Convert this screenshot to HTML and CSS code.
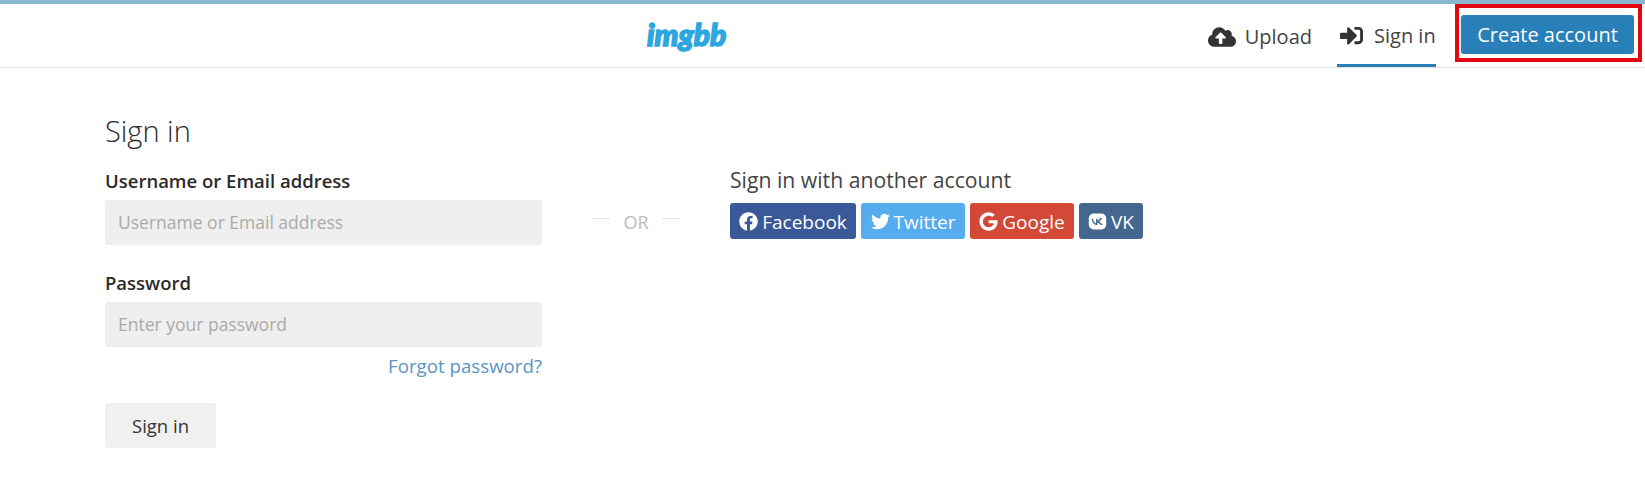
FILE: index.html
```html
<!DOCTYPE html>
<html lang="en">
<head>
<meta charset="utf-8">
<title>imgbb - Sign in</title>
<link rel="stylesheet" href="styles.css">
</head>
<body>
<header class="top-bar">
  <a class="logo" href="#">imgbb</a>
  <nav class="nav">
    <a class="nav-item" href="#">
      <svg class="nav-icon icon-upload" viewBox="0 0 640 512"><path d="M537.6 226.6c4.1-10.7 6.4-22.4 6.4-34.6 0-53-43-96-96-96-19.7 0-38.1 6-53.3 16.2C367 64.2 315.3 32 256 32c-88.4 0-160 71.6-160 160 0 2.7.1 5.4.2 8.1C40.2 219.8 0 273.2 0 336c0 79.5 64.5 144 144 144h368c70.7 0 128-57.3 128-128 0-61.9-44-113.6-102.4-125.4zM393.4 288H328v112c0 8.8-7.2 16-16 16h-48c-8.8 0-16-7.2-16-16V288h-65.4c-14.3 0-21.4-17.2-11.3-27.3l105.4-105.4c6.2-6.2 16.4-6.2 22.6 0l105.4 105.4c10.1 10.1 2.9 27.3-11.3 27.3z"/></svg>
      <span>Upload</span>
    </a>
    <a class="nav-item nav-item-active" href="#">
      <svg class="nav-icon icon-signin" viewBox="0 0 512 512"><path d="M416 448h-84c-6.6 0-12-5.4-12-12v-40c0-6.6 5.4-12 12-12h84c17.7 0 32-14.3 32-32V160c0-17.7-14.3-32-32-32h-84c-6.6 0-12-5.4-12-12V76c0-6.6 5.4-12 12-12h84c53 0 96 43 96 96v192c0 53-43 96-96 96zm-47-201L201 79c-15-15-41-4.5-41 17v96H24c-13.3 0-24 10.7-24 24v96c0 13.3 10.7 24 24 24h136v96c0 21.5 26 32 41 17l168-168c9.3-9.4 9.3-24.6 0-34z"/></svg>
      <span>Sign in</span>
    </a>
    <div class="highlight">
      <a class="create-btn" href="#">Create account</a>
    </div>
  </nav>
</header>

<main class="content">
  <form class="signin-form">
    <h1 class="title">Sign in</h1>
    <label class="field-label" for="user">Username or Email address</label>
    <input class="field-input" id="user" type="text" placeholder="Username or Email address">
    <label class="field-label field-label-second" for="pass">Password</label>
    <input class="field-input" id="pass" type="password" placeholder="Enter your password">
    <a class="forgot" href="#">Forgot password?</a>
    <button class="submit" type="button">Sign in</button>
  </form>

  <div class="or"><span class="or-line"></span><span>OR</span><span class="or-line"></span></div>

  <section class="social">
    <h2 class="social-title">Sign in with another account</h2>
    <div class="social-buttons">
      <a class="social-btn btn-facebook" href="#">
        <svg class="social-icon" viewBox="0 0 512 512"><path d="M504 256C504 119 393 8 256 8S8 119 8 256c0 123.78 90.69 226.38 209.25 245V327.69h-63V256h63v-54.64c0-62.15 37-96.48 93.67-96.48 27.14 0 55.52 4.84 55.52 4.84v61h-31.28c-30.8 0-40.41 19.12-40.41 38.73V256h68.78l-11 71.69h-57.78V501C413.31 482.38 504 379.78 504 256z"/></svg>
        <span>Facebook</span>
      </a>
      <a class="social-btn btn-twitter" href="#">
        <svg class="social-icon" viewBox="0 0 512 512"><path d="M459.37 151.716c.325 4.548.325 9.097.325 13.645 0 138.72-105.583 298.558-298.558 298.558-59.452 0-114.68-17.219-161.137-47.106 8.447.974 16.568 1.299 25.34 1.299 49.055 0 94.213-16.568 130.274-44.832-46.132-.975-84.792-31.188-98.112-72.772 6.498.974 12.995 1.624 19.818 1.624 9.421 0 18.843-1.3 27.614-3.573-48.081-9.747-84.143-51.98-84.143-102.985v-1.299c13.969 7.797 30.214 12.67 47.431 13.319-28.264-18.843-46.781-51.005-46.781-87.391 0-19.492 5.197-37.36 14.294-52.954 51.655 63.675 129.3 105.258 216.365 109.807-1.624-7.797-2.599-15.918-2.599-24.04 0-57.828 46.782-104.934 104.934-104.934 30.213 0 57.502 12.67 76.67 33.137 23.715-4.548 46.456-13.32 66.599-25.34-7.798 24.366-24.366 44.833-46.132 57.827 21.117-2.273 41.584-8.122 60.426-16.243-14.292 20.791-32.161 39.308-52.628 54.253z"/></svg>
        <span>Twitter</span>
      </a>
      <a class="social-btn btn-google" href="#">
        <svg class="social-icon" viewBox="0 0 488 512"><path d="M488 261.8C488 403.3 391.1 504 248 504 110.8 504 0 393.2 0 256S110.8 8 248 8c66.8 0 123 24.5 166.3 64.9l-67.5 64.9C258.5 52.6 94.3 116.6 94.3 256c0 86.5 69.1 156.6 153.7 156.6 98.2 0 135-70.4 140.8-106.9H248v-85.3h236.1c2.3 12.7 3.9 24.9 3.9 41.4z"/></svg>
        <span>Google</span>
      </a>
      <a class="social-btn btn-vk" href="#">
        <svg class="social-icon" viewBox="0 0 24 24"><rect class="vk-box" x="1" y="2" width="22" height="20" rx="6"/><path class="vk-mark" d="M5.5 8.5c.4 3.6 2.2 6.8 5.6 7V8.5M11.2 12c2 0 3.6-1.4 4.3-3.5M11.3 12c2.3.2 4 1.7 5 3.600M15.500 8.500h2M16.300 15.600h2"/></svg>
        <span>VK</span>
      </a>
    </div>
  </section>
</main>
</body>
</html>
```

FILE: styles.css
```css
* {
  box-sizing: border-box;
}

html, body {
  margin: 0;
  padding: 0;
  background: #fff;
}

body {
  font-family: "Open Sans", "Liberation Sans", sans-serif;
  color: #333;
  overflow: hidden;
}

a {
  text-decoration: none;
  color: inherit;
}

.top-bar {
  position: relative;
  height: 68px;
  border-top: 4px solid #8ab8d3;
  border-bottom: 1px solid #e3e3e3;
  display: flex;
  justify-content: flex-end;
}

.logo {
  position: absolute;
  left: 647px;
  top: 13px;
  font-family: "Lato", sans-serif;
  font-weight: 900;
  font-style: italic;
  font-size: 30px;
  line-height: 34px;
  color: #2ea6df;
  -webkit-text-stroke: 1.5px #2ea6df;
}

.nav {
  display: flex;
  align-items: stretch;
  height: 63px;
  padding-right: 3px;
}

.nav-item {
  display: flex;
  align-items: center;
  gap: 9px;
  font-size: 20px;
  color: #444;
  padding: 2px 0 0 3px;
  margin-right: 25px;
}

.nav-item-active {
  width: 99px;
  margin-right: 19px;
  border-bottom: 3px solid #2980b9;
  gap: 11px;
}

.nav-icon {
  fill: #333;
  display: block;
}

.icon-upload {
  width: 28px;
  height: 24px;
}

.icon-signin {
  width: 23px;
  height: 23px;
}

.highlight {
  border: 4px solid #e30613;
  padding: 7px 4px 4px 2px;
  width: 187px;
  height: 58px;
}

.create-btn {
  display: flex;
  align-items: center;
  justify-content: center;
  width: 173px;
  height: 39px;
  background: #2980b9;
  color: #fff;
  border-radius: 3px;
  font-size: 20px;
}

.content {
  display: flex;
  align-items: flex-start;
  padding: 0 0 0 105px;
}

.signin-form {
  display: flex;
  flex-direction: column;
  width: 437px;
  padding-top: 42px;
}

.title {
  margin: 0 0 16px;
  font-size: 29px;
  line-height: 42px;
  font-weight: 300;
  color: #2b2b2b;
}

.field-label {
  font-size: 18.5px;
  line-height: 26px;
  font-weight: 600;
  color: #2b2b2b;
  margin-bottom: 6px;
}

.field-label-second {
  margin-top: 25px;
}

.field-input {
  height: 45px;
  border: 0;
  border-radius: 3px;
  background: #efefef;
  padding: 0 13px 1px;
  font-family: inherit;
  font-size: 17.5px;
  color: #333;
}

.field-input::placeholder {
  color: #aaa;
  opacity: 1;
}

.forgot {
  align-self: flex-end;
  font-size: 18.7px;
  line-height: 26px;
  margin-top: 6px;
  color: #5b94c1;
}

.submit {
  margin-top: 24px;
  width: 111px;
  height: 45px;
  border: 0;
  border-radius: 3px;
  background: #f0f0f0;
  font-family: inherit;
  font-size: 18.5px;
  color: #333;
}

.or {
  display: flex;
  align-items: center;
  gap: 13px;
  width: 88px;
  margin: 141px 0 0 50px;
  font-size: 18px;
  line-height: 26px;
  color: #bbb;
}

.or-line {
  flex: 1;
  height: 1px;
  margin-bottom: 7px;
  background: #e2e2e2;
}

.social {
  margin: 98px 0 0 50px;
}

.social-title {
  margin: 0 0 9px;
  font-size: 21.2px;
  line-height: 28px;
  font-weight: 400;
  color: #444;
}

.social-buttons {
  display: flex;
  gap: 5px;
}

.social-btn {
  display: flex;
  align-items: center;
  justify-content: center;
  gap: 4px;
  height: 36px;
  border-radius: 3px;
  color: #fff;
  font-size: 19px;
  padding-top: 1px;
}

.social-icon {
  width: 19px;
  height: 19px;
  fill: #fff;
  display: block;
}

.btn-facebook {
  width: 126px;
  background: #3b5998;
}

.btn-twitter {
  width: 104px;
  background: #55acee;
}

.btn-google {
  width: 104px;
  background: #d34836;
}

.btn-vk {
  width: 64px;
  background: #45668e;
}

.vk-box {
  fill: #fff;
}

.vk-mark {
  fill: none;
  stroke: #45668e;
  stroke-width: 1.8;
}
```
